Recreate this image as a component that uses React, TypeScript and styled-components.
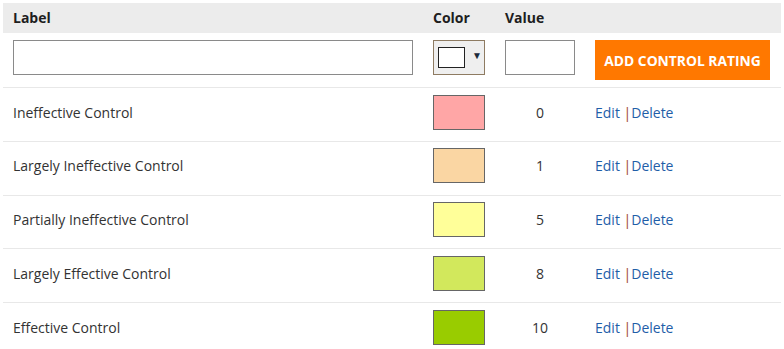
import React from "react";
import styled, { createGlobalStyle } from "styled-components";

const Global = createGlobalStyle`
  body {
    margin: 3px;
    background: #ffffff;
    font-family: "Open Sans", "Liberation Sans", sans-serif;
    font-size: 14px;
    color: #333333;
  }
  * { box-sizing: border-box; }
`;

const Table = styled.div`
  width: 778px;
`;

const Row = styled.div<{ $variant?: "head" | "form" | "data" }>`
  display: grid;
  grid-template-columns: 400px 52px 70px 175px;
  column-gap: 20px;
  padding: ${(p) =>
    p.$variant === "head" ? "0 10px" : p.$variant === "form" ? "7px 10px" : "6.5px 10px 0"};
  height: ${(p) => (p.$variant === "head" ? "30px" : p.$variant === "form" ? "54px" : "53.75px")};
  align-items: ${(p) => (p.$variant === "head" ? "center" : "start")};
  background: ${(p) => (p.$variant === "head" ? "#ececec" : "#ffffff")};
  border-top: ${(p) => (p.$variant === "head" ? "none" : "1px solid #e8e8e8")};
  &:nth-child(2) { border-top: none; }
`;

const HeadCell = styled.div`
  font-weight: 700;
  color: #1e1e1e;
  font-size: 14px;
  margin-top: -1px;
`;

const TextInput = styled.input<{ $w: number }>`
  width: ${(p) => p.$w}px;
  height: 35px;
  border: 1px solid #8a8a8a;
  background: #fff;
  padding: 0 6px;
  font: inherit;
  outline: none;
`;

const ColorPicker = styled.div`
  width: 52px;
  height: 35px;
  border: 1px solid #8e7b62;
  background: #efefef;
  display: flex;
  align-items: center;
  padding-left: 4px;
  gap: 7px;
`;

const PickerSwatch = styled.div`
  width: 27px;
  height: 21px;
  border: 1px solid #222;
  background: #fff;
`;

const Arrow = styled.span`
  font-size: 10px;
  color: #1c2a3a;
  margin-top: -5px;
`;

const AddButton = styled.button`
  width: 175px;
  height: 40px;
  border: none;
  background: #ff7800;
  color: #fff;
  font-family: inherit;
  font-weight: 700;
  font-size: 13.8px;
  cursor: pointer;
  padding: 0;
`;

const CellText = styled.div<{ $center?: boolean }>`
  height: 35px;
  display: flex;
  align-items: center;
  justify-content: ${(p) => (p.$center ? "center" : "flex-start")};
  color: #333;
`;

const Swatch = styled.div<{ $c: string }>`
  width: 52px;
  height: 35px;
  border: 1px solid #666;
  background: ${(p) => p.$c};
`;

const Actions = styled(CellText)`
  color: #1f5ea8;
`;

const Link = styled.a`
  color: #1f5ea8;
  text-decoration: none;
  cursor: pointer;
`;

const Sep = styled.span`
  color: #a0442a;
`;

const data = [
  { label: "Ineffective Control", color: "#ffa6a6", value: 0 },
  { label: "Largely Ineffective Control", color: "#fad6a3", value: 1 },
  { label: "Partially Ineffective Control", color: "#ffff99", value: 5 },
  { label: "Largely Effective Control", color: "#d2e85c", value: 8 },
  { label: "Effective Control", color: "#99cc00", value: 10 },
];

export default function App() {
  return (
    <>
      <Global />
      <Table>
        <Row $variant="head">
          <HeadCell>Label</HeadCell>
          <HeadCell>Color</HeadCell>
          <HeadCell>Value</HeadCell>
          <div />
        </Row>
        <Row $variant="form">
          <TextInput $w={400} type="text" />
          <ColorPicker>
            <PickerSwatch />
            <Arrow>▼</Arrow>
          </ColorPicker>
          <TextInput $w={70} type="text" />
          <AddButton>ADD CONTROL RATING</AddButton>
        </Row>
        {data.map((d) => (
          <Row $variant="data" key={d.label}>
            <CellText>{d.label}</CellText>
            <Swatch $c={d.color} />
            <CellText $center>{d.value}</CellText>
            <Actions>
              <span>
                <Link>Edit</Link>{" "}<Sep>|</Sep><Link>Delete</Link>
              </span>
            </Actions>
          </Row>
        ))}
      </Table>
    </>
  );
}
